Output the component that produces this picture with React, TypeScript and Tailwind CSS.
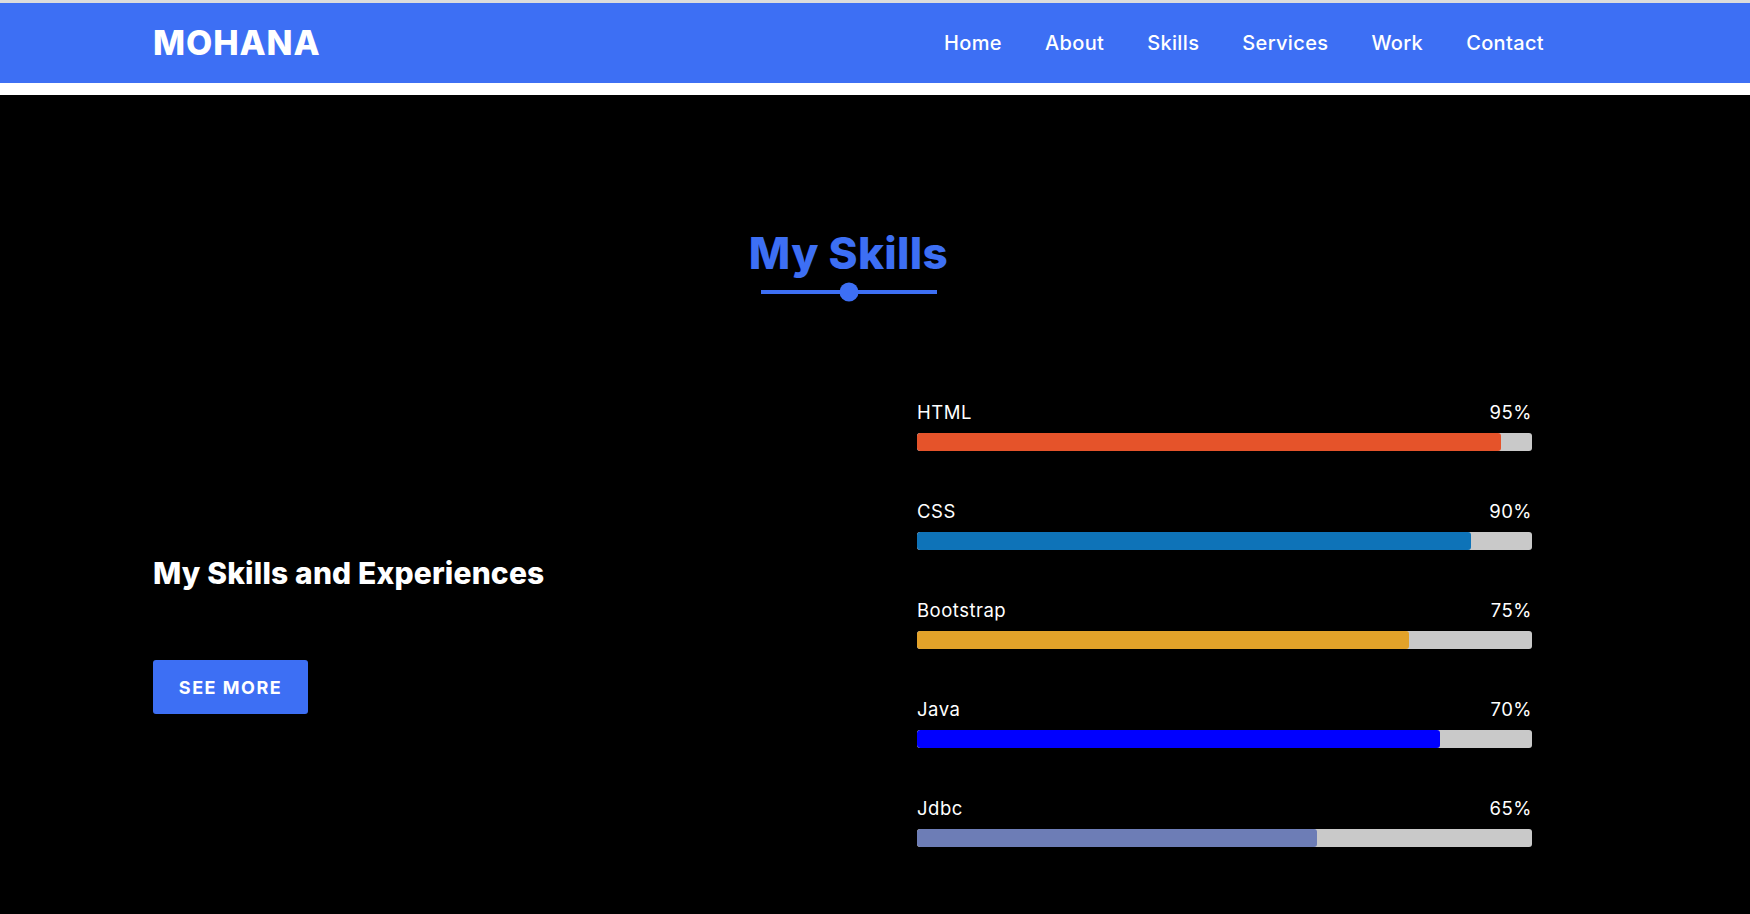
import React from "react";

const skills = [
  { name: "HTML", pct: "95%", fill: 95, color: "bg-[#e5532a]" },
  { name: "CSS", pct: "90%", fill: 90, color: "bg-[#0e73b8]" },
  { name: "Bootstrap", pct: "75%", fill: 80, color: "bg-[#e3a229]" },
  { name: "Java", pct: "70%", fill: 85, color: "bg-[#0000ff]" },
  { name: "Jdbc", pct: "65%", fill: 65, color: "bg-[#6d7db6]" },
];

export default function App() {
  return (
    <div className="min-h-screen bg-black font-['Inter','Liberation_Sans',sans-serif]">
      <div className="h-[3px] bg-[#dcdcdc]" />
      <header className="h-[80px] bg-[#3d6ff4]">
        <div className="ml-[153px] w-[1391px] h-full flex items-center justify-between">
          <div className="text-white font-extrabold text-[34px] leading-none tracking-[0.9px]">MOHANA</div>
          <nav className="flex items-center gap-[43px] text-white text-[20px] font-medium tracking-[0.35px]">
            <a>Home</a>
            <a>About</a>
            <a>Skills</a>
            <a>Services</a>
            <a>Work</a>
            <a>Contact</a>
          </nav>
        </div>
      </header>
      <div className="h-[12px] bg-white" />
      <section className="bg-black pt-[136px] pb-[60px]">
        <div className="ml-[153px] w-[1391px]">
          <div className="flex flex-col items-center">
            <h2 className="text-[#3d6ff4] text-[44px] leading-[44px] font-extrabold tracking-[0.3px]">My Skills</h2>
            <div className="relative mt-[7px] w-[176px] h-[20px] flex items-center justify-center">
              <div className="w-full h-[4px] bg-[#3d6ff4]" />
              <div className="absolute left-1/2 top-1/2 -translate-x-1/2 -translate-y-1/2 w-[19px] h-[19px] rounded-full bg-[#3d6ff4]" />
            </div>
          </div>
          <div className="mt-[97px] flex">
            <div className="flex-1 pt-[152px]">
              <h3 className="text-white text-[30px] leading-[44px] font-extrabold tracking-[0.15px]">My Skills and Experiences</h3>
              <button className="mt-[65px] h-[54px] w-[155px] rounded-[3px] bg-[#3d6ff4] text-white text-[18px] font-bold tracking-[1.5px]">
                SEE MORE
              </button>
            </div>
            <div className="w-[615px] mr-[12px] flex flex-col gap-[47px]">
              {skills.map((s) => (
                <div key={s.name}>
                  <div className="flex justify-between text-white text-[18.5px] leading-[27px] tracking-[0.5px]">
                    <span>{s.name}</span>
                    <span>{s.pct}</span>
                  </div>
                  <div className="mt-[7px] h-[18px] rounded-[3px] bg-[#c9c9c9] overflow-hidden">
                    <div className={`h-full rounded-[3px] ${s.color}`} style={{ width: `${s.fill}%` }} />
                  </div>
                </div>
              ))}
            </div>
          </div>
        </div>
      </section>
    </div>
  );
}
